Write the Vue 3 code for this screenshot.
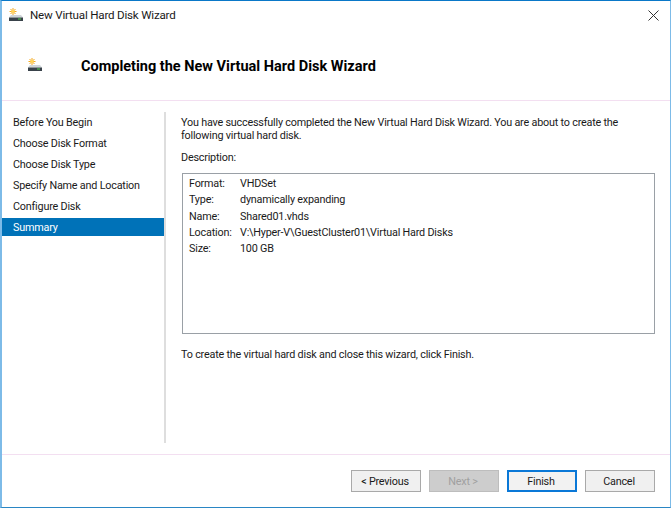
<script setup>
const steps = ['Before You Begin', 'Choose Disk Format', 'Choose Disk Type', 'Specify Name and Location', 'Configure Disk', 'Summary']
const rows = [
  ['Format:', 'VHDSet'],
  ['Type:', 'dynamically expanding'],
  ['Name:', 'Shared01.vhds'],
  ['Location:', 'V:\\Hyper-V\\GuestCluster01\\Virtual Hard Disks'],
  ['Size:', '100 GB']
]
const buttons = [
  { label: '< Previous', cls: '' },
  { label: 'Next >', cls: 'disabled' },
  { label: 'Finish', cls: 'primary' },
  { label: 'Cancel', cls: '' }
]
</script>

<template>
  <div class="window">
    <div class="titlebar">
      <svg class="icon" width="14" height="14" viewBox="0 0 14 14">
        <g stroke="#f5a81c" stroke-width="1"><path d="M4 0v7M.5 3.5h7M1.5 1l5 5M6.5 1l-5 5" /></g>
        <circle cx="4" cy="3.5" r="1.7" fill="#ffd35c" />
        <path d="M2 7h10l2 2.5H0z" fill="#cfd5d8" />
        <rect x="0" y="9.5" width="14" height="3.5" fill="#39424a" />
        <rect x="9" y="10.5" width="3" height="1" fill="#4fd04a" />
      </svg>
      <span class="title">New Virtual Hard Disk Wizard</span>
      <svg class="close" width="11" height="11" viewBox="0 0 11 11"><path d="M.5.5l10 10M10.5.5l-10 10" stroke="#333" stroke-width="1" fill="none" /></svg>
    </div>
    <div class="header">
      <svg class="icon" width="14" height="14" viewBox="0 0 14 14">
        <g stroke="#f5a81c" stroke-width="1"><path d="M4 0v7M.5 3.5h7M1.5 1l5 5M6.5 1l-5 5" /></g>
        <circle cx="4" cy="3.5" r="1.7" fill="#ffd35c" />
        <path d="M2 7h10l2 2.5H0z" fill="#cfd5d8" />
        <rect x="0" y="9.5" width="14" height="3.5" fill="#39424a" />
        <rect x="9" y="10.5" width="3" height="1" fill="#4fd04a" />
      </svg>
      <h1>Completing the New Virtual Hard Disk Wizard</h1>
    </div>
    <div class="main">
      <nav class="nav">
        <div v-for="s in steps" :key="s" class="step" :class="{ active: s === 'Summary' }">{{ s }}</div>
      </nav>
      <section class="content">
        <p class="intro">You have successfully completed the New Virtual Hard Disk Wizard. You are about to create the following virtual hard disk.</p>
        <p class="desc">Description:</p>
        <div class="box">
          <div v-for="r in rows" :key="r[0]" class="row"><span class="key">{{ r[0] }}</span><span>{{ r[1] }}</span></div>
        </div>
        <p class="closing">To create the virtual hard disk and close this wizard, click Finish.</p>
      </section>
    </div>
    <div class="footer">
      <button v-for="b in buttons" :key="b.label" class="btn" :class="b.cls">{{ b.label }}</button>
    </div>
  </div>
</template>

<style>
html, body { margin: 0; background: #fff; }
</style>

<style scoped>
.window {
  box-sizing: border-box;
  width: 671px;
  height: 508px;
  display: flex;
  flex-direction: column;
  background: #fff;
  border-top: 1px solid #0a78c8;
  border-left: 2px solid #7dbbe8;
  border-right: 1px solid #7dbbe8;
  border-bottom: 1px solid #2a86c4;
  font-family: Roboto, "Noto Sans", sans-serif;
  font-size: 10.8px;
  letter-spacing: -0.2px;
  color: #1a1a1a;
}
.titlebar {
  height: 28px;
  display: flex;
  align-items: center;
  padding: 0 11px 0 7px;
  flex: none;
}
.title { margin-left: 7px; font-size: 11.6px; flex: 1; }
.icon { flex: none; }
.header {
  box-sizing: border-box;
  height: 72px;
  flex: none;
  display: flex;
  align-items: flex-start;
  padding: 29px 0 0 26px;
  border-bottom: 1px solid #f3dff1;
}
h1 {
  margin: -1px 0 0 39px;
  font-size: 14.5px;
  letter-spacing: 0;
  font-weight: 700;
  color: #000;
  line-height: 20px;
}
.main {
  flex: 1;
  display: flex;
  min-height: 0;
  padding-top: 11px;
}
.nav {
  box-sizing: border-box;
  width: 164px;
  height: 331px;
  flex: none;
  border-right: 2px solid #dedede;
}
.step {
  height: 21px;
  line-height: 21px;
  padding-left: 11px;
}
.active { background: #0072b8; color: #fff; height: 18px; line-height: 20px; margin-top: 1px; }
.content {
  flex: 1;
  padding: 4px 15px 0 15px;
}
p { margin: 0; }
.intro { line-height: 13px; }
.desc { margin-top: 9px; line-height: 14px; }
.box {
  box-sizing: border-box;
  height: 161px;
  margin: 8px 0 0 1px;
  border: 1px solid #9aa0a6;
  padding: 2px 6px;
}
.row { display: flex; height: 16.25px; line-height: 16px; }
.key { width: 51px; flex: none; }
.closing { margin-top: 14px; line-height: 14px; }
.footer {
  flex: none;
  height: 53px;
  box-sizing: border-box;
  border-top: 1px solid #f3dff1;
  display: flex;
  justify-content: flex-end;
  gap: 8px;
  padding: 15px 15px 0 0;
}
.btn {
  box-sizing: border-box;
  width: 70px;
  height: 22px;
  padding: 0 2px 0 0;
  border: 1px solid #a9a9a9;
  background: #f0f0f0;
  font: inherit;
  letter-spacing: inherit;
  color: #1a1a1a;
}
.disabled { background: #cdcdcd; border-color: #bdbdbd; color: #a0a0a0; }
.primary { border: 2px solid #0a78d7; background: #f2f2f2; }
</style>
